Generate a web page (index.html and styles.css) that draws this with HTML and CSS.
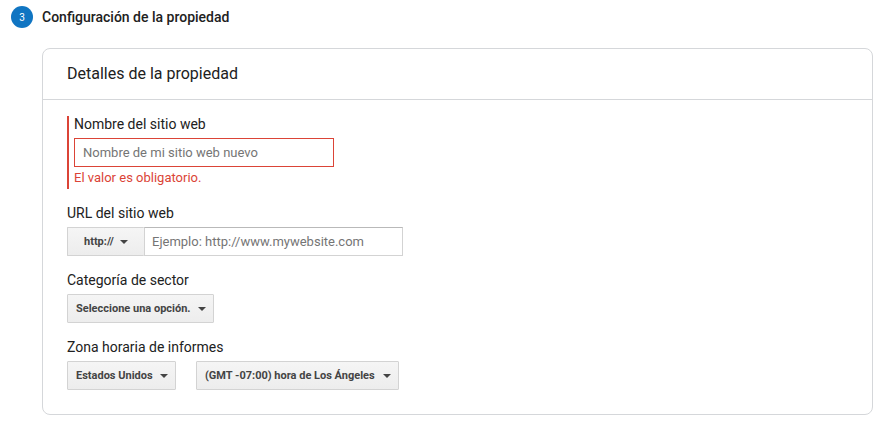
FILE: index.html
```html
<!DOCTYPE html>
<html lang="es">
<head>
  <meta charset="utf-8">
  <meta name="viewport" content="width=device-width, initial-scale=1">
  <title>Configuración de la propiedad</title>
  <link rel="stylesheet" href="styles.css">
</head>
<body>
  <main class="step">
    <header class="step-header">
      <span class="step-number">3</span>
      <h1 class="step-title">Configuración de la propiedad</h1>
    </header>
    <section class="card">
      <h2 class="card-title">Detalles de la propiedad</h2>
      <form class="card-body">
        <div class="field field-error">
          <label class="label" for="site-name">Nombre del sitio web</label>
          <input class="input" id="site-name" type="text" placeholder="Nombre de mi sitio web nuevo" aria-describedby="site-name-error">
          <p class="error" id="site-name-error">El valor es obligatorio.</p>
        </div>
        <div class="field">
          <label class="label" for="site-url">URL del sitio web</label>
          <div class="url-row">
            <span class="dropdown dropdown-protocol">
              <select class="select" aria-label="Protocolo"><option>http://</option></select>
              <svg class="arrow" viewBox="0 0 8 4" aria-hidden="true"><path d="M0 0h8L4 4z"/></svg>
            </span>
            <input class="input" id="site-url" type="text" placeholder="Ejemplo: http://www.mywebsite.com">
          </div>
        </div>
        <div class="field">
          <label class="label" for="sector">Categoría de sector</label>
          <span class="dropdown">
            <select class="select" id="sector"><option>Seleccione una opción.</option></select>
            <svg class="arrow" viewBox="0 0 8 4" aria-hidden="true"><path d="M0 0h8L4 4z"/></svg>
          </span>
        </div>
        <div class="field">
          <label class="label" for="country">Zona horaria de informes</label>
          <div class="zone-row">
            <span class="dropdown">
              <select class="select" id="country"><option>Estados Unidos</option></select>
              <svg class="arrow" viewBox="0 0 8 4" aria-hidden="true"><path d="M0 0h8L4 4z"/></svg>
            </span>
            <span class="dropdown">
              <select class="select" aria-label="Zona horaria"><option>(GMT -07:00) hora de Los Ángeles</option></select>
              <svg class="arrow" viewBox="0 0 8 4" aria-hidden="true"><path d="M0 0h8L4 4z"/></svg>
            </span>
          </div>
        </div>
      </form>
    </section>
  </main>
</body>
</html>
```
FILE: styles.css
```css
* {
  box-sizing: border-box;
}

body {
  margin: 0;
  background: #fff;
  color: #212121;
  font-family: Roboto, "Liberation Sans", sans-serif;
  font-size: 14px;
}

.step {
  padding: 6px 8px 6px 11px;
}

.step-header {
  display: flex;
  align-items: center;
  gap: 9px;
}

.step-number {
  display: flex;
  align-items: center;
  justify-content: center;
  width: 22px;
  height: 22px;
  border-radius: 50%;
  background: #1075c2;
  color: #fff;
  font-size: 10px;
}

.step-title {
  margin: 0;
  font-size: 14px;
  font-weight: 500;
  line-height: 22px;
}

.card {
  margin: 20px 0 0 31px;
  border: 1px solid #d5d7da;
  border-radius: 8px;
}

.card-title {
  margin: 0;
  padding: 0 24px;
  border-bottom: 1px solid #d5d7da;
  font-size: 16px;
  font-weight: 400;
  line-height: 50px;
}

.card-body {
  display: flex;
  flex-direction: column;
  align-items: flex-start;
  gap: 16px;
  padding: 16px 24px 24px;
}

.field {
  display: flex;
  flex-direction: column;
  align-items: flex-start;
}

.field-error {
  padding-left: 5px;
  border-left: 2px solid #db4437;
}

.label {
  margin-bottom: 6px;
  line-height: 16px;
}

.input {
  width: 260px;
  height: 29px;
  padding: 0 8px;
  border: 1px solid #d3d3d3;
  border-top-color: #b9b9b9;
  border-radius: 0;
  background: #fff;
  color: #212121;
  font: inherit;
  font-size: 13px;
}

.input::placeholder {
  color: #757575;
  opacity: 1;
}

.field-error .input {
  border-color: #db4437;
}

.error {
  margin: 0;
  color: #db4437;
  font-size: 13px;
  line-height: 22px;
}

.url-row {
  display: flex;
}

.url-row .input {
  width: 259px;
  padding-left: 7px;
}

.zone-row {
  display: flex;
  gap: 20px;
}

.dropdown {
  display: inline-flex;
  position: relative;
}

.select {
  appearance: none;
  height: 29px;
  margin: 0;
  padding: 0 22px 0 8px;
  border: 1px solid #d3d3d3;
  border-radius: 1px;
  background: linear-gradient(#f5f5f5, #ededed);
  color: #444;
  font: inherit;
  font-size: 11px;
  font-weight: 700;
}

.dropdown-protocol .select {
  width: 77px;
  padding: 0 16px;
  border-right: 0;
}

.arrow {
  position: absolute;
  top: 13px;
  right: 8px;
  width: 8px;
  height: 4px;
  fill: #444;
  pointer-events: none;
}

.dropdown-protocol .arrow {
  right: 16px;
}
```
